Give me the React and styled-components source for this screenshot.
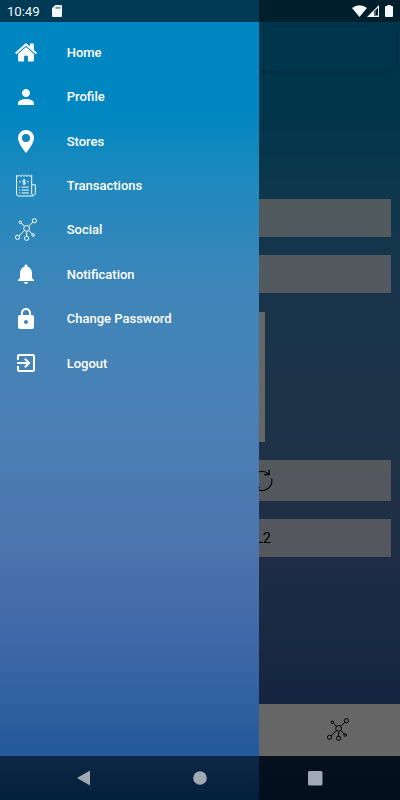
import React from "react";
import styled, { createGlobalStyle } from "styled-components";
import {
  MdPerson,
  MdNotifications,
  MdLock,
  MdExitToApp
} from "react-icons/md";

const GlobalStyle = createGlobalStyle`
  * {
    box-sizing: border-box;
  }
  body {
    margin: 0;
    font-family: Roboto, "Liberation Sans", sans-serif;
  }
`;

const Phone = styled.div`
  display: flex;
  flex-direction: column;
  width: 400px;
  height: 800px;
  overflow: hidden;
`;

const StatusBar = styled.div`
  display: flex;
  align-items: center;
  height: 22px;
  padding: 0 7px;
  background: linear-gradient(to right, #003a54 259px, #001f2c 259px);
  color: #f4f7f9;
  font-size: 13.3px;
`;
const Clock = styled.span`
  width: 45px;
  line-height: 22px;
  padding-top: 1px;
  letter-spacing: -0.1px;
`;
const StatusIcons = styled.div`
  display: flex;
  align-items: center;
  margin-left: auto;
`;

const Stack = styled.div`
  display: grid;
  flex: 1;
  grid-template: 1fr / 1fr;
  > * {
    grid-area: 1 / 1;
  }
`;

const Page = styled.main`
  display: flex;
  flex-direction: column;
  background: linear-gradient(
    #0085bd 0,
    #0085bd 90px,
    #1f8abe 160px,
    #3f83b8 270px,
    #4a80b4 400px,
    #4c71ac 530px,
    #4069a8 610px,
    #355ca2 680px
  );
`;
const Header = styled.header`
  height: 43px;
  margin: 5px 4px 0;
  background: #0087c0;
  box-shadow: 0 1px 5px rgba(0, 0, 0, 0.22);
`;
const Content = styled.div`
  display: flex;
  flex-direction: column;
  flex: 1;
  gap: 18.3px;
  padding: 129px 9px 0;
`;
const Field = styled.div`
  display: flex;
  align-items: center;
  height: ${props => props.$height || 38}px;
  padding: 1px 0 0 ${props => props.$indent || 0}px;
  background: rgba(255, 255, 255, 0.75);
  color: #000;
  font-size: 14.5px;
`;
const CodeBox = styled.div`
  align-self: center;
  width: 130px;
  height: 130px;
  background: #fff;
`;
const TabBar = styled.nav`
  display: flex;
  align-items: center;
  justify-content: flex-end;
  height: 52px;
  padding: 0 51px 1px 0;
  background: #fff;
`;

const Scrim = styled.div`
  background: rgba(0, 0, 0, 0.6);
`;

const Drawer = styled.aside`
  width: 259px;
  padding-top: 8px;
  background: linear-gradient(
    #0087c1 0,
    #0087c1 90px,
    #1f89be 160px,
    #3f85b9 270px,
    #4b80b5 400px,
    #4b74ad 530px,
    #4069a8 610px,
    #3060a1 680px,
    #23589c 734px
  );
`;
const MenuItem = styled.div`
  display: flex;
  align-items: center;
  height: 44.45px;
  color: #fff;
  font-size: 13px;
  font-weight: 500;
`;
const IconSlot = styled.span`
  display: flex;
  align-items: center;
  justify-content: center;
  width: 52px;
  margin-right: 14.7px;
`;

const SystemNav = styled.div`
  display: grid;
  grid-template-columns: repeat(3, 116px);
  align-items: center;
  justify-content: center;
  justify-items: center;
  height: 44px;
  color: #a0a9b4;
  background: linear-gradient(to right, transparent 259px, #00000090 259px),
    linear-gradient(#0d2745, #04203f);
`;

const HouseIcon = () => (
  <svg width="22" height="19" viewBox="0 0 22 19" fill="currentColor">
    <path d="M11 0l3.900 3.500V.6h3.900v6.300L22 9.700l-1.300 1.600L11 2.800 1.300 11.300 0 9.700z" />
    <path d="M11 3.900l7.900 7v6.600a1 1 0 0 1-1 1h-5v-5.800H9.100v5.800h-5a1 1 0 0 1-1-1v-6.600z" />
  </svg>
);

const PinIcon = () => (
  <svg width="16" height="23" viewBox="0 0 16 23" fill="currentColor">
    <path
      fillRule="evenodd"
      d="M8 0a8 8 0 0 0-8 8c0 5.800 8 15 8 15s8-9.200 8-15a8 8 0 0 0-8-8zm0 4a4 4 0 1 1 0 8 4 4 0 0 1 0-8z"
    />
  </svg>
);

const ReceiptIcon = () => (
  <svg
    width="20"
    height="24"
    viewBox="0.200 0.800 20.800 24"
    fill="none"
    stroke="currentColor"
    strokeWidth="1"
  >
    <path d="M16.500 11.500h3.800v9.500a2 2 0 0 1-3.800 0V1.500l-1.600 1.300-1.600-1.300-1.600 1.300-1.600-1.300-1.600 1.300-1.600-1.300-1.600 1.300-1.600-1.300-1.600 1.300L.8 1.500v19.700a2 2 0 0 0 2 2h15.600" />
    <path d="M3.500 8.500h2M11.500 8.500h2M10.100 7.300c-.6-1-2.900-1-2.900.3 0 1.400 2.900.8 2.900 2.200 0 1.300-2.400 1.300-3 .3M8.600 5.600v6" />
    <path d="M3.500 14h1M6 14h7.500M3.500 17h1M6 17h7.500M3.500 20h1M6 20h7.500" />
  </svg>
);

const NetworkIcon = () => (
  <svg
    width="22"
    height="23"
    viewBox="0 0 22 23"
    fill="none"
    stroke="currentColor"
    strokeWidth="1"
  >
    <circle cx="11.600" cy="10.400" r="2.900" />
    <circle cx="5.300" cy="4.200" r="1.300" />
    <circle cx="19.400" cy="2.700" r="2.100" />
    <circle cx="2.500" cy="19.300" r="2.100" />
    <circle cx="11.600" cy="20.300" r="2.100" />
    <circle cx="18.200" cy="17" r="1.300" />
    <path d="M6.300 5.200l3.200 3.100M13.700 8.300l4.200-4.100M9.500 12.500l-5.400 5.300M11.600 13.300v4.900M13.700 12.500l3.500 3.500" />
  </svg>
);

const RefreshIcon = () => (
  <svg
    width="22"
    height="22"
    viewBox="0 0 22 22"
    fill="none"
    stroke="currentColor"
    strokeWidth="1.200"
  >
    <path d="M1.300 13.500A10 10 0 0 1 18 4.200M20.700 8.500A10 10 0 0 1 4 17.800" />
    <path d="M13.200 4.600h5V0M8.800 17.400h-5V22" />
  </svg>
);

const SdCardIcon = () => (
  <svg width="10" height="12" viewBox="0 0 10 12">
    <path d="M3.300 0H9a1 1 0 0 1 1 1v10a1 1 0 0 1-1 1H1a1 1 0 0 1-1-1V3.300z" fill="currentColor" />
    <path d="M4.200 1.800v2M6 1.800v2M7.800 1.800v2" stroke="#003a54" strokeWidth="0.9" />
  </svg>
);

const WifiIcon = () => (
  <svg width="15" height="12" viewBox="0 0 15 12" fill="currentColor">
    <path d="M0 3a11.500 11.500 0 0 1 15 0L7.500 12z" />
  </svg>
);

const SignalIcon = () => (
  <svg width="12" height="12" viewBox="0 0 12 12">
    <path d="M12 0v12H0z" fill="currentColor" />
    <path d="M11 2.800v7.700H7V6.500z" fill="#001f2c" />
    <path d="M7 6.500l2-2v6H7z" fill="#52636e" />
  </svg>
);

const BatteryIcon = () => (
  <svg width="8" height="12" viewBox="0 0 8 12" fill="currentColor">
    <path d="M2.200 0h3.600v1H7a1 1 0 0 1 1 1v9a1 1 0 0 1-1 1H1a1 1 0 0 1-1-1V2a1 1 0 0 1 1-1h1.200z" />
  </svg>
);

const BatterySlot = styled.span`
  display: flex;
  margin-left: 6px;
`;

const menu = [
  { label: "Home", icon: <HouseIcon /> },
  { label: "Profile", icon: <MdPerson size={24} /> },
  { label: "Stores", icon: <PinIcon /> },
  { label: "Transactions", icon: <ReceiptIcon /> },
  { label: "Social", icon: <NetworkIcon /> },
  { label: "Notification", icon: <MdNotifications size={24} /> },
  { label: "Change Password", icon: <MdLock size={24} /> },
  { label: "Logout", icon: <MdExitToApp size={24} /> }
];

const App = () => (
  <>
    <GlobalStyle />
    <Phone>
      <StatusBar>
        <Clock>10:49</Clock>
        <SdCardIcon />
        <StatusIcons>
          <WifiIcon />
          <SignalIcon />
          <BatterySlot>
            <BatteryIcon />
          </BatterySlot>
        </StatusIcons>
      </StatusBar>
      <Stack>
        <Page>
          <Header />
          <Content>
            <Field />
            <Field />
            <CodeBox />
            <Field $height={41} $indent={242}>
              <RefreshIcon />
            </Field>
            <Field $indent={246}>L2</Field>
          </Content>
          <TabBar>
            <NetworkIcon />
          </TabBar>
        </Page>
        <Scrim />
        <Drawer>
          {menu.map(item => (
            <MenuItem key={item.label}>
              <IconSlot>{item.icon}</IconSlot>
              {item.label}
            </MenuItem>
          ))}
        </Drawer>
      </Stack>
      <SystemNav>
        <svg width="15" height="16" viewBox="0 0 15 16" fill="currentColor">
          <path d="M13 .5v15L0 8z" />
        </svg>
        <svg width="14" height="14" viewBox="0 0 14 14" fill="currentColor">
          <circle cx="7" cy="7" r="6.800" />
        </svg>
        <svg width="16" height="15" viewBox="0 0 16 15" fill="currentColor">
          <rect width="14.500" height="14.500" rx="1.500" />
        </svg>
      </SystemNav>
    </Phone>
  </>
);

export default App;
